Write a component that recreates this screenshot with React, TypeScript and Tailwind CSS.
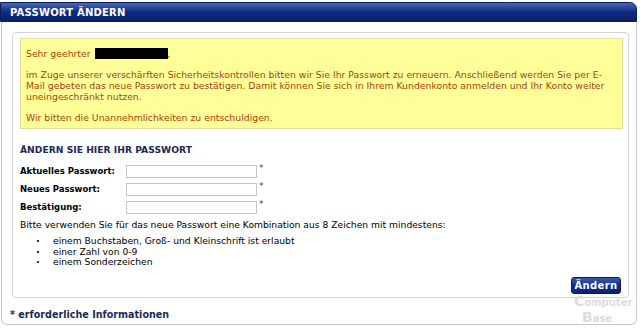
import React from 'react';

const rows = [
  { label: 'Aktuelles Passwort:' },
  { label: 'Neues Passwort:' },
  { label: 'Bestätigung:' },
];

const rules = [
  'einem Buchstaben, Groß- und Kleinschrift ist erlaubt',
  'einer Zahl von 0-9',
  'einem Sonderzeichen',
];

function App() {
  return (
    <div className="relative w-[640px] h-[329px] overflow-hidden bg-white font-['DejaVu_Sans',Verdana,sans-serif] text-[9px] text-black">
      {/* watermark, sits under the panel content */}
      <div className="pointer-events-none absolute left-[574px] top-[293px] select-none text-[#dcdcdc]">
        <div className="flex items-end h-[16px]">
          <span className="text-[14px] leading-[16px] font-bold">C</span>
          <span className="text-[10px] leading-[13px] font-bold">omputer</span>
        </div>
        <div className="ml-[8px] flex items-end h-[16px]">
          <span className="text-[14px] leading-[16px] font-bold">B</span>
          <span className="text-[10px] leading-[13px] font-bold">ase</span>
        </div>
      </div>

      {/* Title bar */}
      <div className="mt-[2px] mr-[3px] h-[20px] rounded-tr-[7px] border border-[#0a1f5e] bg-gradient-to-b from-[#4a67b4] via-[#0f2b82] to-[#0a2168] pl-[9px] flex items-center">
        <span className="text-[10px] font-bold tracking-[0.2px] text-white">PASSWORT ÄNDERN</span>
      </div>

      {/* Outer panel */}
      <div className="mr-[3px] ml-[1px] h-[303px] rounded-b-[6px] border border-t-0 border-[#c9c9c9] flex flex-col">
        <div className="mt-[10px] ml-[10px] mr-[7px] h-[266px] rounded-[4px] border border-[#d3d3d3] px-[7px] pt-[5px] flex flex-col">
          {/* Notice */}
          <div className="mr-[-2px] h-[91px] border border-[#e3dc9c] bg-[#ffff99] px-[5px] pt-[9px] text-[9.3px] leading-[11px] text-[#a8420c]">
            <p className="flex items-center">
              Sehr geehrter <span className="ml-[4px] inline-block h-[11px] w-[73px] bg-black" />,
            </p>
            <p className="mt-[10px]">
              im Zuge unserer verschärften Sicherheitskontrollen bitten wir Sie Ihr Passwort zu erneuern. Anschließend werden Sie per E-
              <br />
              Mail gebeten das neue Passwort zu bestätigen. Damit können Sie sich in Ihrem Kundenkonto anmelden und Ihr Konto weiter
              <br />
              uneingeschränkt nutzen.
            </p>
            <p className="mt-[10px]">Wir bitten die Unannehmlichkeiten zu entschuldigen.</p>
          </div>

          <h2 className="mt-[15px] text-[9.2px] font-bold leading-[11px] text-[#1b2a55]">
            ÄNDERN SIE HIER IHR PASSWORT
          </h2>

          <div className="mt-[10px] flex flex-col gap-[5px]">
            {rows.map((r) => (
              <div key={r.label} className="flex items-center h-[13px]">
                <span className="w-[106px] text-[8.5px] font-bold">{r.label}</span>
                <input
                  type="password"
                  className="h-[13px] w-[131px] border border-[#c6c6c6] bg-white outline-none"
                />
                <span className="ml-[2px] -mt-[6px] text-[9px] text-[#444]">*</span>
              </div>
            ))}
          </div>

          <p className="mt-[5px] text-[9.2px] leading-[11px]">
            Bitte verwenden Sie für das neue Passwort eine Kombination aus 8 Zeichen mit mindestens:
          </p>

          <ul className="mt-[6px] text-[9.2px] leading-[10.5px]">
            {rules.map((t) => (
              <li key={t} className="flex items-center pl-[17px]">
                <span className="mr-[14px] h-[2px] w-[2px] bg-[#333]" />
                {t}
              </li>
            ))}
          </ul>

          <div className="mt-auto mb-[3px] flex justify-end">
            <button className="relative h-[17px] w-[50px] rounded-[3px] border border-[#0a1a55] bg-gradient-to-b from-[#3b58aa] via-[#12308a] to-[#0b2170] text-[10px] font-bold tracking-[0.4px] text-white">
              Ändern
            </button>
          </div>
        </div>

        <p className="mt-[10px] ml-[8px] text-[9.6px] font-bold text-[#1b2a55]">
          * erforderliche Informationen
        </p>
      </div>
    </div>
  );
}

export default App;
